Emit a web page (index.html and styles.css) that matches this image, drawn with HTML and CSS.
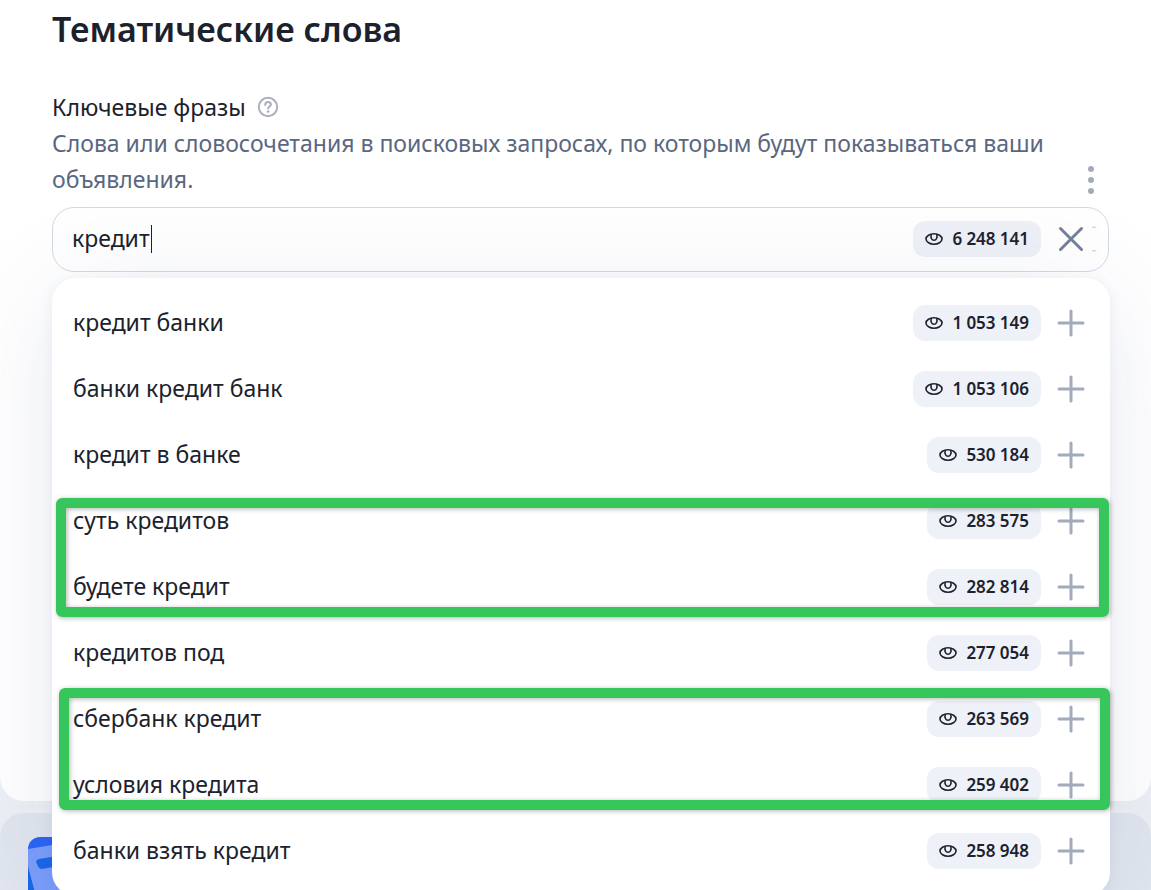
FILE: index.html
```
<!DOCTYPE html>
<html lang="ru">
  <head>
    <meta charset="UTF-8" />
    <meta name="viewport" content="width=device-width, initial-scale=1.0" />
    <title>Тематические слова</title>
    <link rel="stylesheet" href="styles.css">
  </head>
  <body>
    <!-- icons -->
    <svg class="sprite" aria-hidden="true">
      <symbol id="eye" viewBox="0 0 18 14">
        <path d="M1 7C1 4 5 1.700 9 1.700S17 4 17 7s-4 5.300-8 5.300S1 10 1 7z" />
        <path d="M6.200 2.600C5.400 5.500 6.600 8.200 9 8.200s3.600-2.700 2.800-5.600" />
      </symbol>
      <symbol id="plus" viewBox="0 0 28 28">
        <path d="M14 2v24M2 14h24" />
      </symbol>
    </svg>

    <main class="card">
      <h1>Тематические слова</h1>

      <div class="label-row">
        <label for="phrase">Ключевые фразы</label>
        <button class="icon-btn help" aria-label="Справка">
          <svg viewBox="0 0 22 22" width="22" height="22">
            <circle cx="11" cy="11" r="9.2" />
            <path d="M8.2 9c0-1.9 1.200-3 2.900-3 1.600 0 2.800 1 2.800 2.500 0 2-2.800 2.100-2.800 4.100" />
            <circle class="dot" cx="11.100" cy="15.600" r="1.300" />
          </svg>
        </button>
      </div>

      <div class="hint-row">
        <p>Слова или словосочетания в поисковых запросах, по которым будут показываться ваши объявления.</p>
        <button class="icon-btn more" aria-label="Ещё">
          <svg viewBox="0 0 8 30" width="8" height="30">
            <circle cx="4" cy="4" r="3" />
            <circle cx="4" cy="15" r="3" />
            <circle cx="4" cy="26" r="3" />
          </svg>
        </button>
      </div>

      <div class="field">
        <div class="search">
          <input type="text" id="phrase" value="кредит" />
          <span class="caret"></span>
          <span class="count"><svg><use href="#eye" /></svg>6&#8197;248&#8197;141</span>
          <button class="icon-btn clear" aria-label="Очистить">
            <svg viewBox="0 0 28 28" width="28" height="28">
              <path d="M3.500 3.500l21 21M24.500 3.500l-21 21" />
            </svg>
          </button>
          <span class="arrows">
            <svg viewBox="0 0 6 28" width="6" height="28">
              <path d="M0 3l3-2 3 2zM0 25l3 2 3-2z" />
            </svg>
          </span>
        </div>

        <div class="dropdown">
          <ul id="list"></ul>
          <div class="mark mark-first"></div>
          <div class="mark mark-second"></div>
        </div>
      </div>
    </main>

    <footer class="card-bottom">
      <svg class="logo" viewBox="0 0 60 60" width="60" height="60">
        <rect width="60" height="60" rx="12" fill="#2864f5" />
        <path d="M0 12L60 2v58H8L0 30z" fill="#7a9dfb" />
        <path d="M0 30l8 30H0z" fill="#1766e8" />
        <path d="M11 22l30-5v10l-27 5q-3 0-4-3l-2-4q0-2 3-3z" fill="#1766e8" />
      </svg>
    </footer>

    <script>
      const phrases = [
        { title: "кредит банки", count: 1053149 },
        { title: "банки кредит банк", count: 1053106 },
        { title: "кредит в банке", count: 530184 },
        { title: "суть кредитов", count: 283575 },
        { title: "будете кредит", count: 282814 },
        { title: "кредитов под", count: 277054 },
        { title: "сбербанк кредит", count: 263569 },
        { title: "условия кредита", count: 259402 },
        { title: "банки взять кредит", count: 258948 },
      ];

      // 1053149 -> 1 053 149
      function format(n) {
        return String(n).replace(/\B(?=(\d{3})+$)/g, "\u2005");
      }

      function render() {
        const list = document.querySelector("#list");
        list.innerHTML = "";
        for (const item of phrases) {
          const li = document.createElement("li");
          li.innerHTML = `
            <span class="title">${item.title}</span>
            <span class="count"><svg><use href="#eye" /></svg>${format(item.count)}</span>
            <button class="icon-btn add" aria-label="Добавить: ${item.title}">
              <svg width="28" height="28"><use href="#plus" /></svg>
            </button>`;
          list.append(li);
        }
      }

      render();
    </script>
  </body>
</html>
```
FILE: styles.css
```
* {
  box-sizing: border-box;
}

body {
  display: flex;
  flex-direction: column;
  gap: 12px;
  height: 100vh;
  margin: 0;
  overflow: hidden;
  background-color: #edf0f5;
  color: #1c222d;
  font-family: "Noto Sans", sans-serif;
  font-size: 23px;
  line-height: 36px;
}

h1 {
  margin: 0 0 36px;
  font-size: 34px;
  font-weight: 600;
  line-height: 48px;
}

p,
ul {
  margin: 0;
  padding: 0;
}

svg {
  display: block;
  fill: none;
  stroke-linecap: round;
}

.sprite {
  position: absolute;
  width: 0;
  height: 0;
}

.card {
  flex: 1;
  padding: 5px 42px 0 52px;
  border-radius: 0 0 24px 24px;
  background-color: white;
}

.label-row {
  display: flex;
  align-items: center;
  gap: 11px;
}

.icon-btn {
  flex: none;
  padding: 0;
  border: 0;
  background: none;
  cursor: pointer;
}

.help svg {
  stroke: #a9b0bf;
  stroke-width: 2;
}

.help .dot {
  fill: #a9b0bf;
  stroke: none;
}

.hint-row {
  display: flex;
  align-items: flex-end;
  justify-content: space-between;
  gap: 16px;
  margin-bottom: 10px;
  color: #596780;
}

.more {
  margin: 0 14px 2px 0;
}

.more svg {
  fill: #a3aab9;
}

.field {
  position: relative;
}

.search {
  display: flex;
  align-items: center;
  height: 65px;
  padding: 0 11px 2px 19px;
  border: 1px solid #d5d9e3;
  border-radius: 22px;
  background-color: white;
}

.search input {
  field-sizing: content;
  min-width: 0;
  padding: 0 1px 2px 0;
  border: 0;
  outline: none;
  background: none;
  color: inherit;
  font: inherit;
}

.caret {
  width: 1px;
  height: 28px;
  background-color: #1c222d;
}

.title {
  padding-bottom: 2px;
}

.count {
  display: flex;
  align-items: center;
  gap: 9px;
  height: 36px;
  margin-left: auto;
  padding: 0 12px;
  border-radius: 12px;
  background-color: #eef1f7;
  font-size: 17px;
  font-weight: 600;
  white-space: nowrap;
}

.count svg {
  width: 18px;
  height: 14px;
  stroke: #1c222d;
  stroke-width: 1.600;
}

.clear {
  margin-left: 16px;
}

.clear svg {
  stroke: #74809a;
  stroke-width: 3;
}

.arrows {
  margin-left: 6px;
}

.arrows svg {
  fill: #d5d8df;
}

.dropdown {
  position: absolute;
  top: calc(100% + 6px);
  left: 0;
  right: -1px;
  padding: 12px 25px 12px 21px;
  border-radius: 24px;
  background-color: white;
  box-shadow: 0 2px 12px rgba(70, 90, 140, 0.08), 0 16px 110px rgba(70, 90, 140, 0.12);
}

li {
  display: flex;
  align-items: center;
  height: 66px;
}

.add {
  margin-left: 16px;
}

.add svg {
  stroke: #a2aabb;
  stroke-width: 3;
}

/* green frames over the rows */
.mark {
  position: absolute;
  border: 10px solid #37c65c;
  border-radius: 6px;
  box-shadow: 1px 1px 5px rgba(0, 0, 0, 0.3), inset 1px 1px 5px rgba(0, 0, 0, 0.3);
  pointer-events: none;
}

.mark-first {
  top: 220px;
  left: 4px;
  right: 1px;
  height: 119px;
}

.mark-second {
  top: 410px;
  left: 7px;
  right: 0;
  height: 122px;
}

.card-bottom {
  height: 77px;
  padding: 24px 28px 0;
  overflow: hidden;
  border-radius: 24px 24px 0 0;
  background-color: #e1e6ef;
}
```
